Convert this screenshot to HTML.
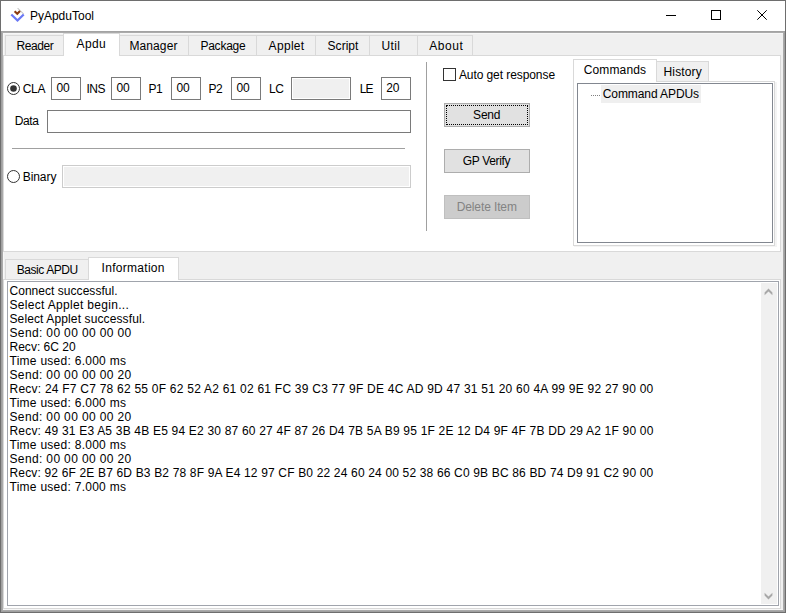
<!DOCTYPE html>
<html><head><meta charset="utf-8"><style>
html,body{margin:0;padding:0;width:786px;height:613px;overflow:hidden;background:#f0f0f0}
.a{position:absolute}
.t{position:absolute;font-family:'Liberation Sans', sans-serif;font-size:12px;line-height:14px;white-space:pre}
</style></head><body>
<div class="a" style="left:0px;top:0px;width:786px;height:613px;background:#f0f0f0;"></div>
<div class="a" style="left:1px;top:1px;width:784px;height:30px;background:#ffffff;"></div>
<div class="a" style="left:0px;top:0px;width:786px;height:1px;background:#6e6e6e;"></div>
<div class="a" style="left:0px;top:0px;width:1px;height:613px;background:#6e6e6e;"></div>
<div class="a" style="left:785px;top:0px;width:1px;height:613px;background:#6e6e6e;"></div>
<div class="a" style="left:0px;top:612px;width:786px;height:1px;background:#6e6e6e;"></div>
<div class="a" style="left:1px;top:31px;width:784px;height:1px;background:#a3a3a3;"></div>
<div class="a" style="left:1px;top:32px;width:784px;height:1px;background:#ababab;"></div>
<div class="a" style="left:1px;top:31px;width:1px;height:581px;background:#a0a0a0;"></div>
<div class="a" style="left:2px;top:32px;width:1px;height:579px;background:#aaaaaa;"></div>
<div class="a" style="left:1px;top:611px;width:784px;height:1px;background:#a0a0a0;"></div>
<div class="a" style="left:2px;top:610px;width:782px;height:1px;background:#aaaaaa;"></div>
<div class="a" style="left:784px;top:31px;width:1px;height:581px;background:#a0a0a0;"></div>
<div class="a" style="left:783px;top:32px;width:1px;height:579px;background:#aaaaaa;"></div>
<div class="a" style="left:3px;top:33px;width:780px;height:1px;background:#f7f7f7;"></div>
<div class="a" style="left:3px;top:33px;width:1px;height:577px;background:#f7f7f7;"></div>
<div class="a" style="left:3px;top:609px;width:780px;height:1px;background:#f7f7f7;"></div>
<svg class="a" style="left:0;top:0" width="40" height="30" viewBox="0 0 40 30">
<path d="M17.6 8.2 L23.8 14.2" stroke="#c8c8c8" stroke-width="1.1" fill="none"/>
<path d="M14.6 11.2 L17.3 13.8 L20.0 11.1" stroke="#8a3a10" stroke-width="2.1" fill="none"/>
<path d="M11.3 14.5 L17.5 20.5 L23.7 14.5" stroke="#6a78f5" stroke-width="2.3" fill="none"/>
</svg>
<div class="a" style="left:666px;top:15px;width:10px;height:1px;background:#000;"></div>
<div class="a" style="left:711px;top:10px;width:10px;height:10px;border:1px solid #000;box-sizing:border-box;"></div>
<svg class="a" style="left:750px;top:4px" width="24" height="22" viewBox="750 4 24 22">
<path d="M757.3 10.3 L766.7 19.7 M766.7 10.3 L757.3 19.7" stroke="#000" stroke-width="1" fill="none"/>
</svg>
<div class="a" style="left:3px;top:55px;width:778px;height:197px;background:#ffffff;border:1px solid #d9d9d9;box-sizing:border-box;"></div>
<div class="a" style="left:5px;top:35px;width:59px;height:21px;background:#f0f0f0;border:1px solid #d9d9d9;box-sizing:border-box;"></div>
<div class="a" style="left:119px;top:35px;width:70px;height:21px;background:#f0f0f0;border:1px solid #d9d9d9;box-sizing:border-box;"></div>
<div class="a" style="left:188px;top:35px;width:69px;height:21px;background:#f0f0f0;border:1px solid #d9d9d9;box-sizing:border-box;"></div>
<div class="a" style="left:256px;top:35px;width:60px;height:21px;background:#f0f0f0;border:1px solid #d9d9d9;box-sizing:border-box;"></div>
<div class="a" style="left:315px;top:35px;width:55px;height:21px;background:#f0f0f0;border:1px solid #d9d9d9;box-sizing:border-box;"></div>
<div class="a" style="left:369px;top:35px;width:49px;height:21px;background:#f0f0f0;border:1px solid #d9d9d9;box-sizing:border-box;"></div>
<div class="a" style="left:417px;top:35px;width:56px;height:21px;background:#f0f0f0;border:1px solid #d9d9d9;box-sizing:border-box;"></div>
<div class="a" style="left:63px;top:33px;width:57px;height:23px;background:#ffffff;border:1px solid #d9d9d9;box-sizing:border-box;border-bottom:none;"></div>
<div class="a" style="left:64px;top:55px;width:55px;height:2px;background:#ffffff;"></div>
<svg class="a" style="left:0;top:0" width="30" height="200" viewBox="0 0 30 200"><circle cx="13.5" cy="88.5" r="6" stroke="#333" stroke-width="1" fill="#fff"/><circle cx="13.5" cy="88.5" r="3.3" fill="#333"/><circle cx="13.5" cy="176.5" r="6" stroke="#333" stroke-width="1" fill="#fff"/></svg>
<div class="a" style="left:51px;top:77px;width:30px;height:23px;background:#fff;border:1px solid #7a7a7a;box-sizing:border-box;"></div>
<div class="a" style="left:111px;top:77px;width:30px;height:23px;background:#fff;border:1px solid #7a7a7a;box-sizing:border-box;"></div>
<div class="a" style="left:171px;top:77px;width:30px;height:23px;background:#fff;border:1px solid #7a7a7a;box-sizing:border-box;"></div>
<div class="a" style="left:231px;top:77px;width:30px;height:23px;background:#fff;border:1px solid #7a7a7a;box-sizing:border-box;"></div>
<div class="a" style="left:381px;top:77px;width:30px;height:23px;background:#fff;border:1px solid #7a7a7a;box-sizing:border-box;"></div>
<div class="a" style="left:291px;top:77px;width:60px;height:23px;background:#f0f0f0;border:1px solid #7a7a7a;box-sizing:border-box;box-shadow:inset 0 0 0 1px #fff;"></div>
<div class="a" style="left:47px;top:110px;width:364px;height:23px;background:#fff;border:1px solid #7a7a7a;box-sizing:border-box;"></div>
<div class="a" style="left:12px;top:148px;width:393px;height:1px;background:#a0a0a0;"></div>
<div class="a" style="left:62px;top:165px;width:349px;height:23px;background:#f0f0f0;border:1px solid #cccccc;box-sizing:border-box;box-shadow:inset 0 0 0 1px #fff;"></div>
<div class="a" style="left:426px;top:62px;width:1px;height:169px;background:#a0a0a0;"></div>
<div class="a" style="left:443px;top:68px;width:13px;height:13px;background:#fff;border:1px solid #333;box-sizing:border-box;"></div>
<div class="a" style="left:444px;top:103px;width:86px;height:24px;background:#e1e1e1;border:1px solid #adadad;box-sizing:border-box;"></div>
<div class="a" style="left:446px;top:105px;width:82px;height:20px;border:1px dotted #000;box-sizing:border-box;"></div>
<div class="a" style="left:444px;top:149px;width:86px;height:24px;background:#e1e1e1;border:1px solid #adadad;box-sizing:border-box;"></div>
<div class="a" style="left:444px;top:195px;width:86px;height:24px;background:#cccccc;border:1px solid #bfbfbf;box-sizing:border-box;"></div>
<div class="a" style="left:573px;top:81px;width:202px;height:165px;background:#fff;border:1px solid #d9d9d9;box-sizing:border-box;"></div>
<div class="a" style="left:775px;top:82px;width:2px;height:165px;background:#f4f4f4;"></div>
<div class="a" style="left:574px;top:246px;width:203px;height:1px;background:#f4f4f4;"></div>
<div class="a" style="left:656px;top:61px;width:53px;height:21px;background:#f0f0f0;border:1px solid #d9d9d9;box-sizing:border-box;"></div>
<div class="a" style="left:573px;top:59px;width:84px;height:23px;background:#fff;border:1px solid #d9d9d9;box-sizing:border-box;border-bottom:none;"></div>
<div class="a" style="left:574px;top:81px;width:82px;height:2px;background:#fff;"></div>
<div class="a" style="left:577px;top:83px;width:196px;height:160px;background:#fff;border:1px solid #828790;box-sizing:border-box;"></div>
<div class="a" style="left:601px;top:85px;width:100px;height:18px;background:#efefef;"></div>
<svg class="a" style="left:590px;top:94px" width="12" height="3"><rect x="1" y="1" width="1" height="1" fill="#808080"/><rect x="3" y="1" width="1" height="1" fill="#808080"/><rect x="5" y="1" width="1" height="1" fill="#808080"/><rect x="7" y="1" width="1" height="1" fill="#808080"/><rect x="9" y="1" width="1" height="1" fill="#808080"/></svg>
<div class="a" style="left:3px;top:279px;width:778px;height:330px;background:#fff;border:1px solid #d9d9d9;box-sizing:border-box;"></div>
<div class="a" style="left:5px;top:259px;width:84px;height:21px;background:#f0f0f0;border:1px solid #d9d9d9;box-sizing:border-box;"></div>
<div class="a" style="left:88px;top:257px;width:91px;height:23px;background:#fff;border:1px solid #d9d9d9;box-sizing:border-box;border-bottom:none;"></div>
<div class="a" style="left:89px;top:279px;width:89px;height:2px;background:#fff;"></div>
<div class="a" style="left:7px;top:281px;width:772px;height:325px;background:#fff;border:1px solid #a0a4ac;box-sizing:border-box;"></div>
<div class="a" style="left:761px;top:283px;width:16px;height:321px;background:#f0f0f0;"></div>
<svg class="a" style="left:760px;top:283px" width="18" height="321" viewBox="760 283 18 321"><path d="M768.5 288.6 L772.4 292.5 L772.4 295.3 L768.5 291.6 L764.6 295.3 L764.6 292.5 Z" fill="#a8a8a8"/><path d="M768.5 599.4 L772.4 595.5 L772.4 592.7 L768.5 596.4 L764.6 592.7 L764.6 595.5 Z" fill="#a8a8a8"/></svg>
<div class="t" style="left:29.90px;top:9.00px;letter-spacing:0.005px;color:#000">PyApduTool</div>
<div class="t" style="left:16.50px;top:39.00px;letter-spacing:-0.427px;color:#000">Reader</div>
<div class="t" style="left:76.60px;top:37.00px;letter-spacing:0.317px;color:#000">Apdu</div>
<div class="t" style="left:129.50px;top:39.00px;letter-spacing:0.089px;color:#000">Manager</div>
<div class="t" style="left:200.40px;top:39.00px;letter-spacing:-0.229px;color:#000">Package</div>
<div class="t" style="left:268.60px;top:39.00px;letter-spacing:0.311px;color:#000">Applet</div>
<div class="t" style="left:327.60px;top:39.00px;letter-spacing:0.019px;color:#000">Script</div>
<div class="t" style="left:381.60px;top:39.00px;letter-spacing:0.289px;color:#000">Util</div>
<div class="t" style="left:429.20px;top:39.00px;letter-spacing:0.588px;color:#000">About</div>
<div class="t" style="left:22.70px;top:82.00px;letter-spacing:-0.281px;color:#000">CLA</div>
<div class="t" style="left:56.50px;top:81.00px;letter-spacing:-0.230px;color:#000">00</div>
<div class="t" style="left:86.50px;top:82.00px;letter-spacing:-0.472px;color:#000">INS</div>
<div class="t" style="left:116.50px;top:81.00px;letter-spacing:-0.230px;color:#000">00</div>
<div class="t" style="left:148.60px;top:82.00px;letter-spacing:-0.594px;color:#000">P1</div>
<div class="t" style="left:176.50px;top:81.00px;letter-spacing:-0.230px;color:#000">00</div>
<div class="t" style="left:208.50px;top:82.00px;letter-spacing:-0.444px;color:#000">P2</div>
<div class="t" style="left:236.50px;top:81.00px;letter-spacing:-0.230px;color:#000">00</div>
<div class="t" style="left:268.90px;top:82.00px;letter-spacing:-0.372px;color:#000">LC</div>
<div class="t" style="left:359.80px;top:82.00px;letter-spacing:-1.094px;color:#000">LE</div>
<div class="t" style="left:386.20px;top:81.00px;letter-spacing:-0.080px;color:#000">20</div>
<div class="t" style="left:14.70px;top:114.00px;letter-spacing:-0.365px;color:#000">Data</div>
<div class="t" style="left:22.70px;top:170.00px;letter-spacing:-0.053px;color:#000">Binary</div>
<div class="t" style="left:458.90px;top:68.00px;letter-spacing:-0.077px;color:#000">Auto get response</div>
<div class="t" style="left:473.10px;top:108.00px;letter-spacing:-0.208px;color:#000">Send</div>
<div class="t" style="left:462.70px;top:154.00px;letter-spacing:-0.319px;color:#000">GP Verify</div>
<div class="t" style="left:456.70px;top:200.00px;letter-spacing:-0.114px;color:#838383">Delete Item</div>
<div class="t" style="left:583.70px;top:63.00px;letter-spacing:0.143px;color:#000">Commands</div>
<div class="t" style="left:663.50px;top:65.00px;letter-spacing:0.151px;color:#000">History</div>
<div class="t" style="left:602.80px;top:87.00px;letter-spacing:-0.090px;color:#000">Command APDUs</div>
<div class="t" style="left:16.70px;top:263.00px;letter-spacing:-0.426px;color:#000">Basic APDU</div>
<div class="t" style="left:101.60px;top:261.00px;letter-spacing:0.288px;color:#000">Information</div>
<div class="t" style="left:9.50px;top:284.00px;letter-spacing:0.037px;color:#000">Connect successful.</div>
<div class="t" style="left:9.50px;top:298.00px;letter-spacing:0.311px;color:#000">Select Applet begin...</div>
<div class="t" style="left:9.50px;top:312.00px;letter-spacing:0.118px;color:#000">Select Applet successful.</div>
<div class="t" style="left:9.50px;top:326.00px;letter-spacing:0.361px;color:#000">Send: 00 00 00 00 00</div>
<div class="t" style="left:9.50px;top:340.00px;letter-spacing:0.015px;color:#000">Recv: 6C 20</div>
<div class="t" style="left:9.50px;top:354.00px;letter-spacing:0.268px;color:#000">Time used: 6.000 ms</div>
<div class="t" style="left:9.50px;top:368.00px;letter-spacing:0.361px;color:#000">Send: 00 00 00 00 20</div>
<div class="t" style="left:9.50px;top:382.00px;letter-spacing:0.233px;color:#000">Recv: 24 F7 C7 78 62 55 0F 62 52 A2 61 02 61 FC 39 C3 77 9F DE 4C AD 9D 47 31 51 20 60 4A 99 9E 92 27 90 00</div>
<div class="t" style="left:9.50px;top:396.00px;letter-spacing:0.268px;color:#000">Time used: 6.000 ms</div>
<div class="t" style="left:9.50px;top:410.00px;letter-spacing:0.361px;color:#000">Send: 00 00 00 00 20</div>
<div class="t" style="left:9.50px;top:424.00px;letter-spacing:0.196px;color:#000">Recv: 49 31 E3 A5 3B 4B E5 94 E2 30 87 60 27 4F 87 26 D4 7B 5A B9 95 1F 2E 12 D4 9F 4F 7B DD 29 A2 1F 90 00</div>
<div class="t" style="left:9.50px;top:438.00px;letter-spacing:0.268px;color:#000">Time used: 8.000 ms</div>
<div class="t" style="left:9.50px;top:452.00px;letter-spacing:0.361px;color:#000">Send: 00 00 00 00 20</div>
<div class="t" style="left:9.50px;top:466.00px;letter-spacing:0.164px;color:#000">Recv: 92 6F 2E B7 6D B3 B2 78 8F 9A E4 12 97 CF B0 22 24 60 24 00 52 38 66 C0 9B BC 86 BD 74 D9 91 C2 90 00</div>
<div class="t" style="left:9.50px;top:480.00px;letter-spacing:0.268px;color:#000">Time used: 7.000 ms</div>
</body></html>
